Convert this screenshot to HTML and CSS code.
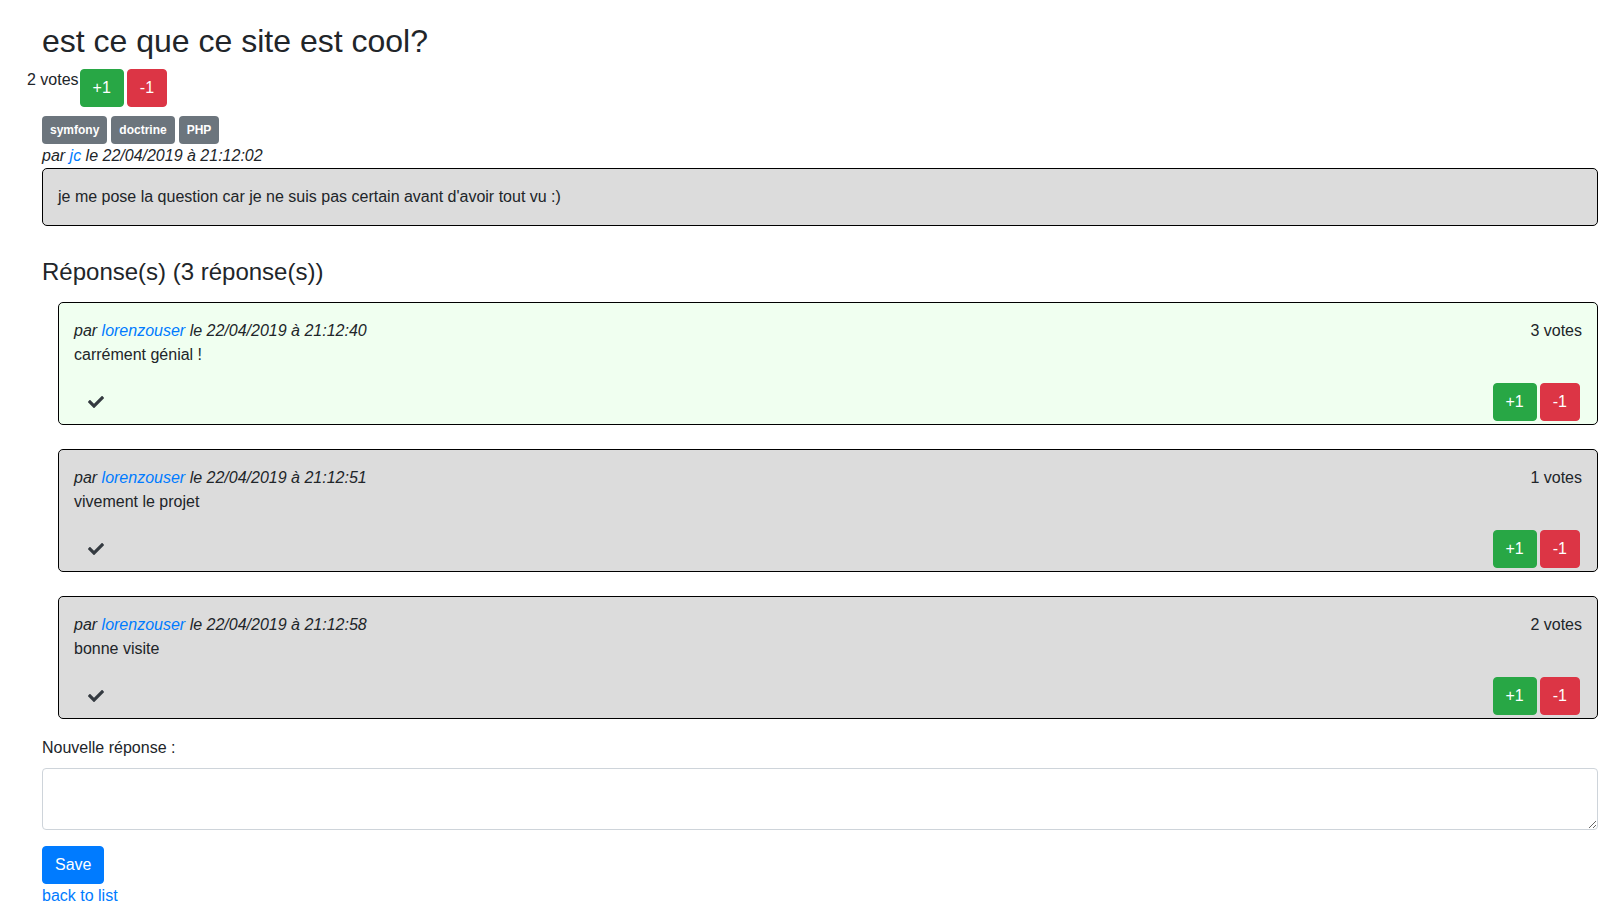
FILE: index.html
```html
<!DOCTYPE html>
<html lang="fr">
<head>
<meta charset="utf-8">
<title>est ce que ce site est cool?</title>
<link rel="stylesheet" href="styles.css">
</head>
<body>
<div class="page">
  <h1 class="title">est ce que ce site est cool?</h1>
  <div class="vote-row">
    <span class="vote-count">2 votes</span>
    <button class="btn btn-up">+1</button>
    <button class="btn btn-down">-1</button>
  </div>
  <div class="tags">
    <span class="badge">symfony</span>
    <span class="badge">doctrine</span>
    <span class="badge">PHP</span>
  </div>
  <div class="meta">par <a href="#">jc</a> le 22/04/2019 à 21:12:02</div>
  <div class="question">je me pose la question car je ne suis pas certain avant d'avoir tout vu :)</div>

  <h2 class="answers-title">Réponse(s) (3 réponse(s))</h2>

  <div class="card card-accepted">
    <div class="card-head">
      <span class="meta">par <a href="#">lorenzouser</a> le 22/04/2019 à 21:12:40</span>
      <span>3 votes</span>
    </div>
    <p class="card-text">carrément génial !</p>
    <div class="card-actions">
      <svg class="check" viewBox="0 65 512 382" width="16" height="12"><path d="M173.898 439.404l-166.4-166.4c-9.997-9.997-9.997-26.206 0-36.204l36.203-36.204c9.997-9.998 26.207-9.998 36.204 0L192 312.69 432.095 72.596c9.997-9.997 26.207-9.997 36.204 0l36.203 36.204c9.997 9.997 9.997 26.206 0 36.204l-294.4 294.401c-9.998 9.997-26.207 9.997-36.204-.001z"/></svg>
      <div class="btn-pair"><button class="btn btn-up">+1</button><button class="btn btn-down">-1</button></div>
    </div>
  </div>

  <div class="card">
    <div class="card-head">
      <span class="meta">par <a href="#">lorenzouser</a> le 22/04/2019 à 21:12:51</span>
      <span>1 votes</span>
    </div>
    <p class="card-text">vivement le projet</p>
    <div class="card-actions">
      <svg class="check" viewBox="0 65 512 382" width="16" height="12"><path d="M173.898 439.404l-166.4-166.4c-9.997-9.997-9.997-26.206 0-36.204l36.203-36.204c9.997-9.998 26.207-9.998 36.204 0L192 312.69 432.095 72.596c9.997-9.997 26.207-9.997 36.204 0l36.203 36.204c9.997 9.997 9.997 26.206 0 36.204l-294.4 294.401c-9.998 9.997-26.207 9.997-36.204-.001z"/></svg>
      <div class="btn-pair"><button class="btn btn-up">+1</button><button class="btn btn-down">-1</button></div>
    </div>
  </div>

  <div class="card card-last">
    <div class="card-head">
      <span class="meta">par <a href="#">lorenzouser</a> le 22/04/2019 à 21:12:58</span>
      <span>2 votes</span>
    </div>
    <p class="card-text">bonne visite</p>
    <div class="card-actions">
      <svg class="check" viewBox="0 65 512 382" width="16" height="12"><path d="M173.898 439.404l-166.4-166.4c-9.997-9.997-9.997-26.206 0-36.204l36.203-36.204c9.997-9.998 26.207-9.998 36.204 0L192 312.69 432.095 72.596c9.997-9.997 26.207-9.997 36.204 0l36.203 36.204c9.997 9.997 9.997 26.206 0 36.204l-294.4 294.401c-9.998 9.997-26.207 9.997-36.204-.001z"/></svg>
      <div class="btn-pair"><button class="btn btn-up">+1</button><button class="btn btn-down">-1</button></div>
    </div>
  </div>

  <form class="reply-form">
    <label class="reply-label" for="reply">Nouvelle réponse :</label>
    <textarea id="reply" class="reply-input"></textarea>
    <button type="button" class="btn btn-save">Save</button>
  </form>
  <a class="back" href="#">back to list</a>
</div>
</body>
</html>
```

FILE: styles.css
```css
html, body {
  margin: 0;
  overflow: hidden;
}

body {
  font-family: "Liberation Sans", Arial, sans-serif;
  font-size: 16px;
  line-height: 24px;
  color: #212529;
  background: #fff;
}

a {
  color: #007bff;
  text-decoration: none;
}

.page {
  padding: 22px 2px 0 42px;
}

.title {
  font-size: 32px;
  font-weight: 500;
  line-height: 1.2;
  margin: 0 0 9px;
}

.vote-row {
  display: flex;
  align-items: flex-start;
  margin-left: -15px;
}

.vote-count {
  margin-right: 1px;
  margin-top: -1px;
}

.btn {
  font-family: "Liberation Sans", Arial, sans-serif;
  font-size: 16px;
  line-height: 24px;
  padding: 6px 12px;
  border: 1px solid transparent;
  border-radius: 4px;
  color: #fff;
  cursor: pointer;
}

.btn-up {
  background: #28a745;
  border-color: #28a745;
}

.btn-down {
  background: #dc3545;
  border-color: #dc3545;
  margin-left: 3px;
}

.btn-save {
  background: #007bff;
  border-color: #007bff;
  display: block;
}

.tags {
  display: flex;
  gap: 4px;
  margin-top: 9px;
}

.badge {
  background: #6c757d;
  color: #fff;
  font-size: 12px;
  font-weight: 700;
  line-height: 14px;
  padding: 7px 8px;
  border-radius: 4px;
}

.meta {
  font-style: italic;
}

.question {
  background: #dcdcdc;
  border: 1px solid #000;
  border-radius: 5px;
  padding: 16px 15px;
}

.answers-title {
  font-size: 24px;
  font-weight: 500;
  line-height: 1.2;
  margin: 32px 0 15px;
}

.card {
  margin-left: 16px;
  margin-bottom: 24px;
  background: #dcdcdc;
  border: 1px solid #000;
  border-radius: 5px;
  padding: 16px 15px 3px 15px;
}

.card-accepted {
  background: #f0fff0;
}

.card-last {
  margin-bottom: 17px;
}

.card-head {
  display: flex;
  justify-content: space-between;
}

.card-text {
  margin: 0 0 16px;
}

.card-actions {
  display: flex;
  align-items: center;
  justify-content: space-between;
  padding: 0 2px 0 14px;
}

.check {
  fill: #343a40;
  display: block;
}

.btn-pair {
  display: flex;
}

.reply-form {
  margin: 0;
}

.reply-label {
  display: block;
  margin-bottom: 8px;
}

.reply-input {
  display: block;
  box-sizing: border-box;
  width: 100%;
  height: 62px;
  padding: 6px 12px;
  border: 1px solid #ced4da;
  border-radius: 4px;
  font-family: "Liberation Sans", Arial, sans-serif;
  font-size: 16px;
  margin: 0 0 16px;
}

.back {
  display: block;
}
```
